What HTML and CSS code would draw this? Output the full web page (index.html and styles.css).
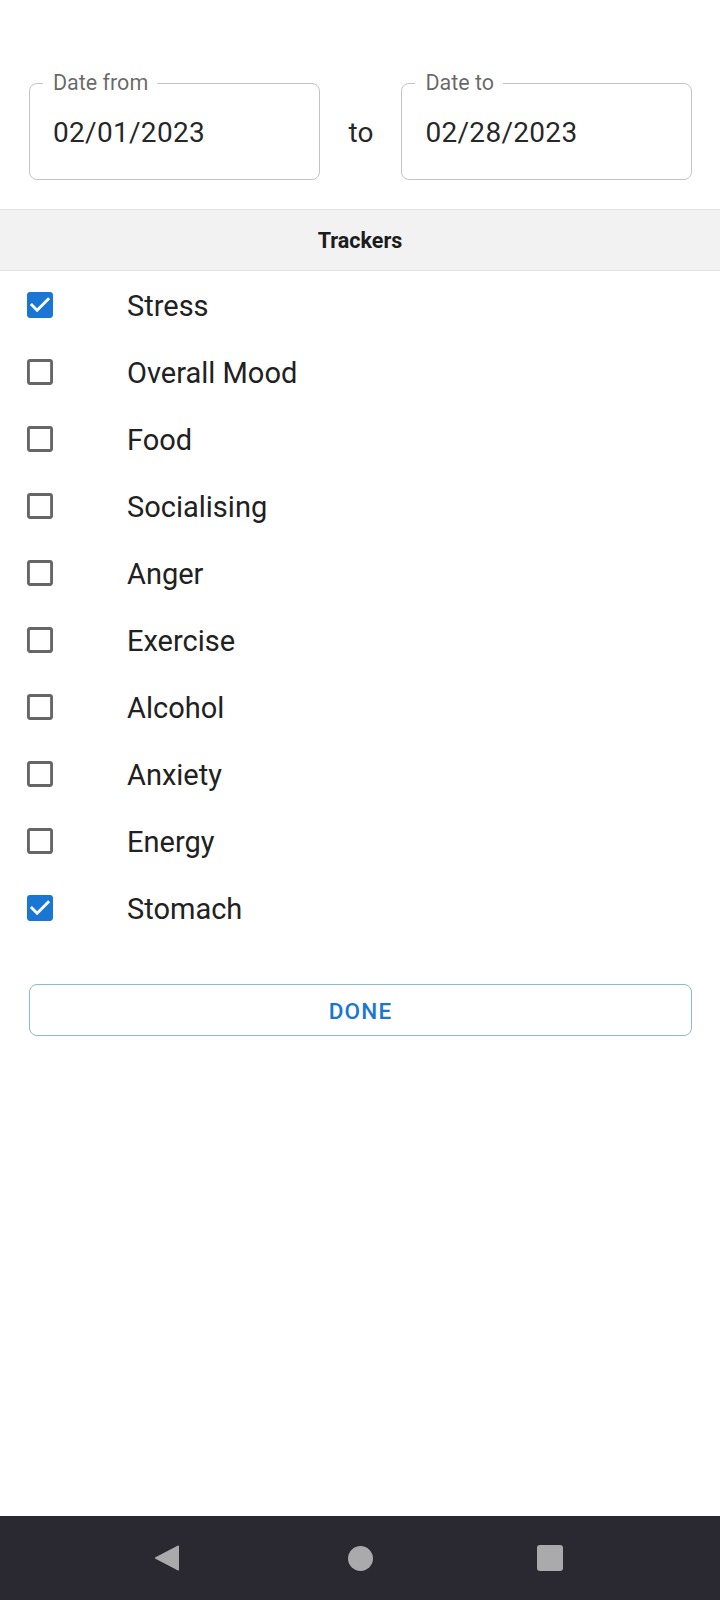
FILE: index.html
```html
<!DOCTYPE html>
<html>
<head>
<meta charset="utf-8">
<link rel="stylesheet" href="styles.css">
</head>
<body>
<div class="screen">
  <div class="dates">
    <div class="field">
      <span class="field-label">Date from</span>
      <span class="field-value">02/01/2023</span>
    </div>
    <span class="to">to</span>
    <div class="field">
      <span class="field-label">Date to</span>
      <span class="field-value">02/28/2023</span>
    </div>
  </div>

  <div class="section-head">Trackers</div>

  <ul class="list">
    <li class="row"><svg class="cb on" viewBox="3 3 18 18"><path d="M19 3H5c-1.11 0-2 .9-2 2v14c0 1.1.89 2 2 2h14c1.11 0 2-.9 2-2V5c0-1.1-.89-2-2-2zm-9 14l-5-5 1.41-1.41L10 14.17l7.59-7.59L19 8l-9 9z"/></svg><span class="label">Stress</span></li>
    <li class="row"><svg class="cb" viewBox="3 3 18 18"><path d="M19 5v14H5V5h14m0-2H5c-1.1 0-2 .9-2 2v14c0 1.1.9 2 2 2h14c1.1 0 2-.9 2-2V5c0-1.1-.9-2-2-2z"/></svg><span class="label">Overall Mood</span></li>
    <li class="row"><svg class="cb" viewBox="3 3 18 18"><path d="M19 5v14H5V5h14m0-2H5c-1.1 0-2 .9-2 2v14c0 1.1.9 2 2 2h14c1.1 0 2-.9 2-2V5c0-1.1-.9-2-2-2z"/></svg><span class="label">Food</span></li>
    <li class="row"><svg class="cb" viewBox="3 3 18 18"><path d="M19 5v14H5V5h14m0-2H5c-1.1 0-2 .9-2 2v14c0 1.1.9 2 2 2h14c1.1 0 2-.9 2-2V5c0-1.1-.9-2-2-2z"/></svg><span class="label">Socialising</span></li>
    <li class="row"><svg class="cb" viewBox="3 3 18 18"><path d="M19 5v14H5V5h14m0-2H5c-1.1 0-2 .9-2 2v14c0 1.1.9 2 2 2h14c1.1 0 2-.9 2-2V5c0-1.1-.9-2-2-2z"/></svg><span class="label">Anger</span></li>
    <li class="row"><svg class="cb" viewBox="3 3 18 18"><path d="M19 5v14H5V5h14m0-2H5c-1.1 0-2 .9-2 2v14c0 1.1.9 2 2 2h14c1.1 0 2-.9 2-2V5c0-1.1-.9-2-2-2z"/></svg><span class="label">Exercise</span></li>
    <li class="row"><svg class="cb" viewBox="3 3 18 18"><path d="M19 5v14H5V5h14m0-2H5c-1.1 0-2 .9-2 2v14c0 1.1.9 2 2 2h14c1.1 0 2-.9 2-2V5c0-1.1-.9-2-2-2z"/></svg><span class="label">Alcohol</span></li>
    <li class="row"><svg class="cb" viewBox="3 3 18 18"><path d="M19 5v14H5V5h14m0-2H5c-1.1 0-2 .9-2 2v14c0 1.1.9 2 2 2h14c1.1 0 2-.9 2-2V5c0-1.1-.9-2-2-2z"/></svg><span class="label">Anxiety</span></li>
    <li class="row"><svg class="cb" viewBox="3 3 18 18"><path d="M19 5v14H5V5h14m0-2H5c-1.1 0-2 .9-2 2v14c0 1.1.9 2 2 2h14c1.1 0 2-.9 2-2V5c0-1.1-.9-2-2-2z"/></svg><span class="label">Energy</span></li>
    <li class="row"><svg class="cb on" viewBox="3 3 18 18"><path d="M19 3H5c-1.11 0-2 .9-2 2v14c0 1.1.89 2 2 2h14c1.11 0 2-.9 2-2V5c0-1.1-.89-2-2-2zm-9 14l-5-5 1.41-1.41L10 14.17l7.59-7.59L19 8l-9 9z"/></svg><span class="label">Stomach</span></li>
  </ul>

  <div class="actions">
    <button class="done">DONE</button>
  </div>

  <nav class="navbar">
    <svg class="nav-icon" width="26" height="28" viewBox="0 0 26 28"><path d="M24 1.5 C24.5 1.2 25 1.5 25 2.2 V25.8 C25 26.5 24.5 26.8 24 26.5 L1.5 14.8 C0.8 14.4 0.8 13.6 1.5 13.2 Z"/></svg>
    <span class="nav-home"></span>
    <span class="nav-recent"></span>
  </nav>
</div>
</body>
</html>
```

FILE: styles.css
```css
* { box-sizing: border-box; }

html, body {
  margin: 0;
  padding: 0;
  background: #ffffff;
}

body {
  font-family: Roboto, "Liberation Sans", Arial, sans-serif;
  color: rgba(0, 0, 0, 0.87);
}

.screen {
  width: 720px;
  height: 1600px;
  display: flex;
  flex-direction: column;
}

.dates {
  display: flex;
  align-items: center;
  padding: 83px 28px 0 29px;
  margin-bottom: 29px;
}

.field {
  position: relative;
  flex: 1;
  height: 97px;
  border: 1px solid #c4c4c4;
  border-radius: 8px;
  display: flex;
  align-items: center;
  padding-left: 23px;
  padding-top: 3px;
}

.field-label {
  position: absolute;
  left: 13px;
  top: -14px;
  padding: 0 9px 0 10px;
  background: #ffffff;
  font-size: 21.5px;
  line-height: 26px;
  color: rgba(0, 0, 0, 0.6);
}

.field-value {
  font-size: 28px;
  line-height: 34px;
  letter-spacing: 0.3px;
}

.to {
  font-size: 28px;
  margin: 3px 28px 0 29px;
  line-height: 34px;
}

.section-head {
  height: 62px;
  background: #f2f2f2;
  border-top: 1px solid #e2e2e2;
  border-bottom: 1px solid #e2e2e2;
  display: flex;
  align-items: center;
  justify-content: center;
  font-size: 21.5px;
  font-weight: 700;
  color: #1c1c1c;
}

.list {
  list-style: none;
  margin: 0;
  padding: 0;
}

.row {
  height: 67px;
  display: flex;
  align-items: center;
  padding-left: 27px;
  padding-top: 1px;
}

.cb {
  width: 26px;
  height: 26px;
  flex: none;
  fill: #666666;
}

.cb.on {
  fill: #1976d2;
}

.label {
  margin-left: 74px;
  font-size: 29px;
  line-height: 34px;
  padding-top: 2px;
  color: #212121;
}

.actions {
  padding: 43px 28px 0 29px;
}

.done {
  display: block;
  width: 100%;
  height: 52px;
  background: #ffffff;
  border: 1px solid #8fb6e0;
  border-radius: 8px;
  font-family: Roboto, "Liberation Sans", Arial, sans-serif;
  font-size: 22.5px;
  font-weight: 500;
  letter-spacing: 1.2px;
  color: #1976d2;
  padding: 2px 0 0 0;
}

.navbar {
  margin-top: auto;
  height: 84px;
  background: #2a2931;
  display: flex;
  align-items: center;
  justify-content: space-between;
  padding: 0 157px 0 154px;
}

.nav-icon {
  fill: #aaaaad;
  display: block;
}

.nav-home {
  width: 25px;
  height: 25px;
  border-radius: 50%;
  background: #aaaaad;
  margin-left: 3px;
}

.nav-recent {
  width: 26px;
  height: 26px;
  border-radius: 3px;
  background: #aaaaad;
}
```
